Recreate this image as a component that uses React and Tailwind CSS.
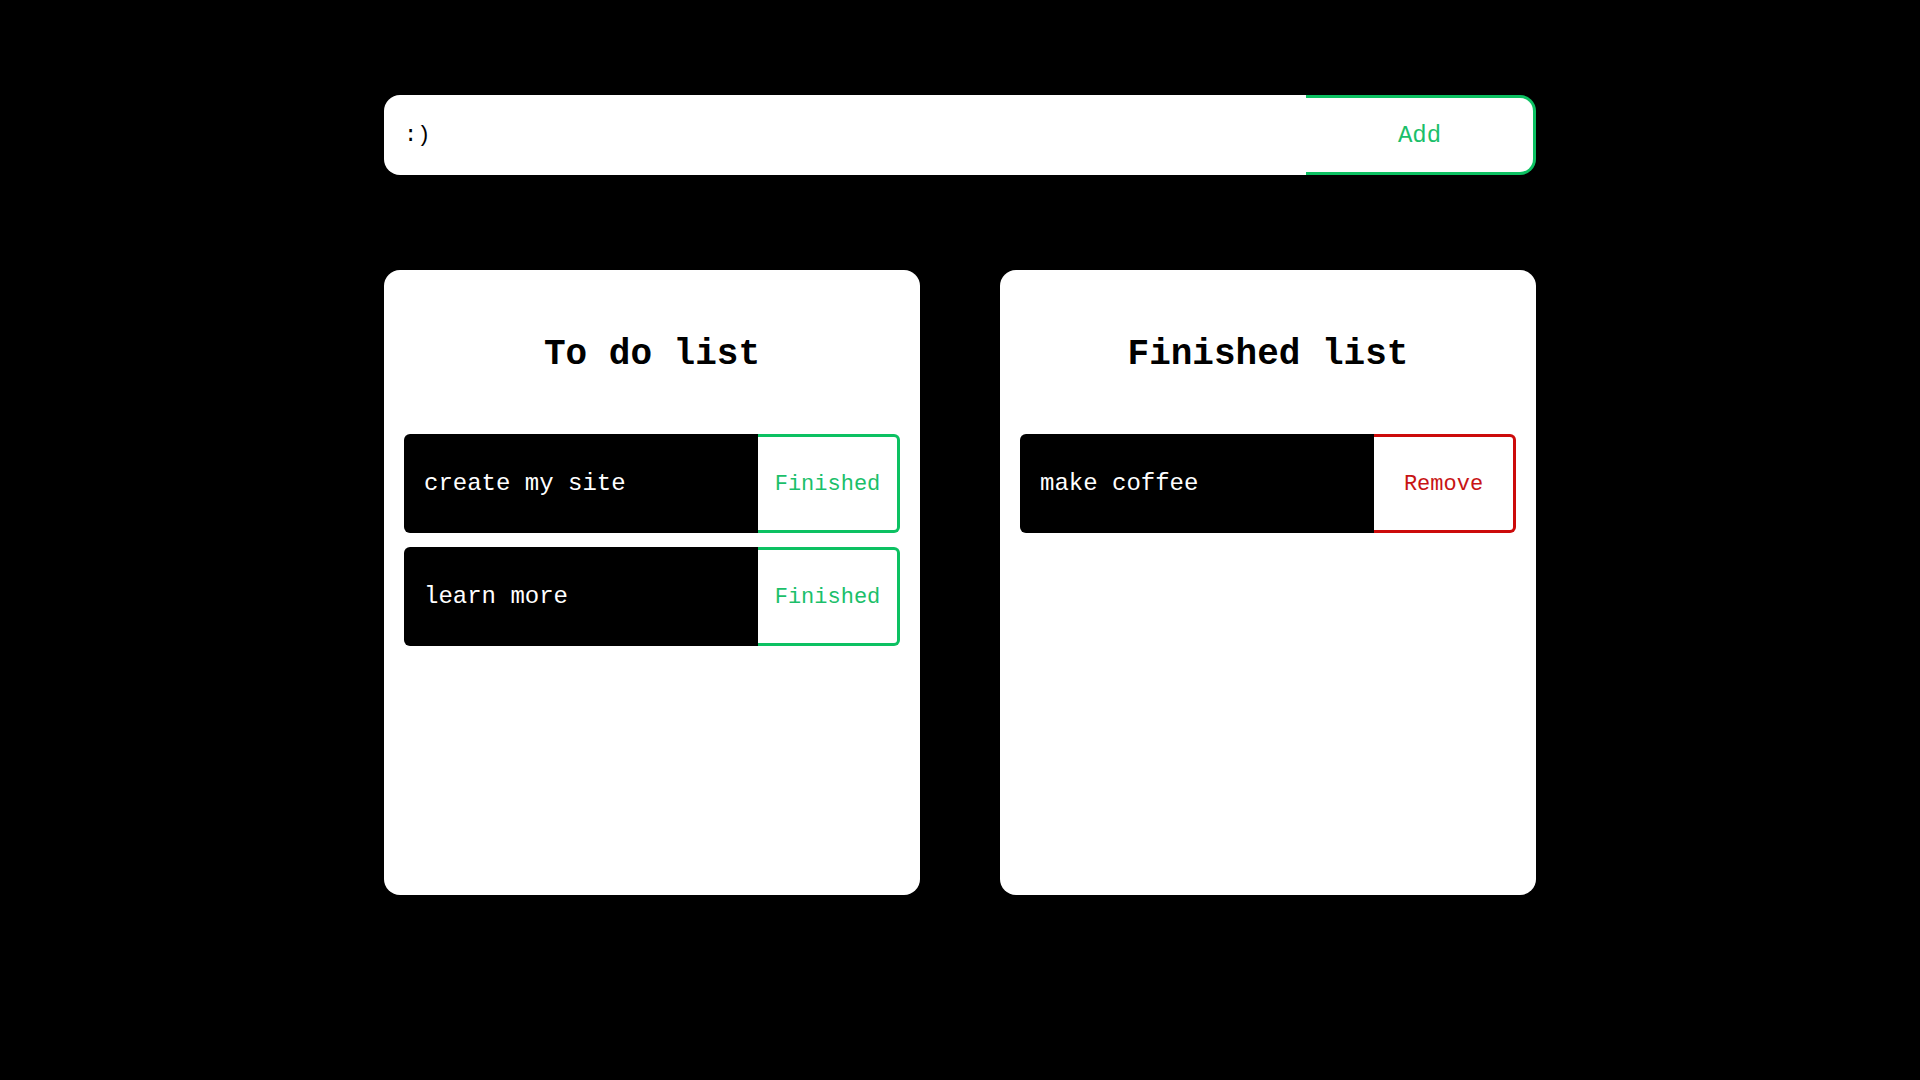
import { useState } from 'react';

const mono = { fontFamily: '"Liberation Mono", "Courier New", monospace' };

function TaskRow({ text, action, tone, onClick }) {
  const btn =
    tone === 'green'
      ? 'border-[#0cc162] text-[#1bbf6a]'
      : 'border-[#cc0a0a] text-[#c81414]';
  return (
    <div className="flex h-[99px] w-full">
      <div className="flex flex-1 items-center rounded-l-[6px] bg-black pl-5 text-[24px] text-white">
        {text}
      </div>
      <button
        type="button"
        onClick={onClick}
        className={`flex w-[142px] items-center justify-center rounded-r-[6px] border-[3px] border-l-0 bg-white pt-[1px] text-[22px] ${btn}`}
        style={mono}
      >
        {action}
      </button>
    </div>
  );
}

function ListCard({ title, children }) {
  return (
    <div className="flex h-[625px] w-[536px] flex-col rounded-2xl bg-white px-5 pt-[65px]">
      <h2 className="h-[40px] text-center text-[36px] font-bold leading-[40px] text-black">{title}</h2>
      <div className="mt-[59px] flex flex-col gap-[14px]">{children}</div>
    </div>
  );
}

export default function App() {
  const [value, setValue] = useState(':)');
  const [todo, setTodo] = useState(['create my site', 'learn more']);
  const [done, setDone] = useState(['make coffee']);

  const add = () => {
    if (!value.trim()) return;
    setTodo([...todo, value]);
    setValue('');
  };

  return (
    <div className="min-h-screen w-full bg-black pt-[95px]" style={mono}>
      <div className="mx-auto w-[1152px]">
        <div className="flex h-[80px] w-full">
          <input
            value={value}
            onChange={(e) => setValue(e.target.value)}
            className="h-full flex-1 rounded-l-2xl bg-white pl-5 text-[22px] text-black outline-none"
            style={mono}
          />
          <button
            type="button"
            onClick={add}
            className="h-full w-[230px] rounded-r-2xl border-[3px] border-l-0 border-[#0cc162] bg-white pt-[2px] text-[24px] text-[#1bbf6a]"
            style={mono}
          >
            Add
          </button>
        </div>

        <div className="mt-[95px] flex justify-between">
          <ListCard title="To do list">
            {todo.map((t, i) => (
              <TaskRow
                key={t + i}
                text={t}
                action="Finished"
                tone="green"
                onClick={() => {
                  setTodo(todo.filter((_, j) => j !== i));
                  setDone([...done, t]);
                }}
              />
            ))}
          </ListCard>
          <ListCard title="Finished list">
            {done.map((t, i) => (
              <TaskRow
                key={t + i}
                text={t}
                action="Remove"
                tone="red"
                onClick={() => setDone(done.filter((_, j) => j !== i))}
              />
            ))}
          </ListCard>
        </div>
      </div>
    </div>
  );
}
